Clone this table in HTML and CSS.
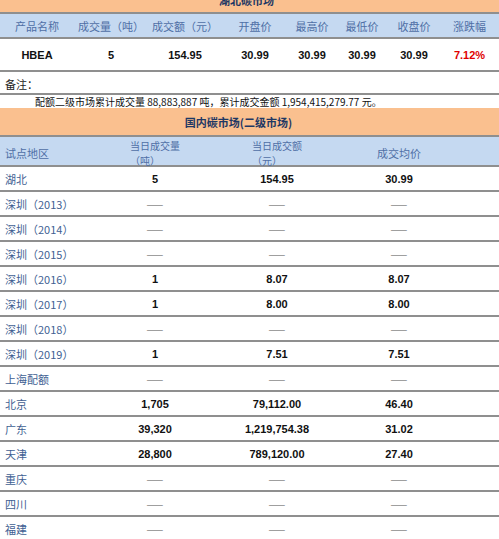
FILE: index.html
```html
<!DOCTYPE html>
<html lang="zh">
<head>
<meta charset="utf-8">
<link rel="stylesheet" href="styles.css">
</head>
<body>
<div class="page">
  <div class="band band-top"><span class="band-title">湖北碳市场</span></div>
  <div class="grid8 head">
    <div>产品名称</div><div>成交量（吨）</div><div>成交额（元）</div><div>开盘价</div><div>最高价</div><div>最低价</div><div>收盘价</div><div>涨跌幅</div>
  </div>
  <div class="grid8 datarow">
    <div>HBEA</div><div>5</div><div>154.95</div><div>30.99</div><div>30.99</div><div>30.99</div><div>30.99</div><div class="red">7.12%</div>
  </div>
  <div class="note">备注：</div>
  <div class="summary">配额二级市场累计成交量 88,883,887 吨，累计成交金额 1,954,415,279.77 元。</div>
  <div class="band band-mid"><span class="band-title">国内碳市场(二级市场)</span></div>
  <div class="grid5 head2">
    <div class="first">试点地区</div>
    <div><span class="wrap"><span class="ln">当日成交量</span><span class="ln">（吨）</span></span></div>
    <div><span class="wrap"><span class="ln">当日成交额</span><span class="ln">（元）</span></span></div>
    <div>成交均价</div>
    <div></div>
  </div>
  <div class="grid5 row"><div class="first">湖北</div><div class="v">5</div><div class="v">154.95</div><div class="v">30.99</div><div></div></div>
  <div class="grid5 row"><div class="first">深圳（2013）</div><div class="d">——</div><div class="d">——</div><div class="d">——</div><div></div></div>
  <div class="grid5 row"><div class="first">深圳（2014）</div><div class="d">——</div><div class="d">——</div><div class="d">——</div><div></div></div>
  <div class="grid5 row"><div class="first">深圳（2015）</div><div class="d">——</div><div class="d">——</div><div class="d">——</div><div></div></div>
  <div class="grid5 row"><div class="first">深圳（2016）</div><div class="v">1</div><div class="v">8.07</div><div class="v">8.07</div><div></div></div>
  <div class="grid5 row"><div class="first">深圳（2017）</div><div class="v">1</div><div class="v">8.00</div><div class="v">8.00</div><div></div></div>
  <div class="grid5 row"><div class="first">深圳（2018）</div><div class="d">——</div><div class="d">——</div><div class="d">——</div><div></div></div>
  <div class="grid5 row"><div class="first">深圳（2019）</div><div class="v">1</div><div class="v">7.51</div><div class="v">7.51</div><div></div></div>
  <div class="grid5 row"><div class="first">上海配额</div><div class="d">——</div><div class="d">——</div><div class="d">——</div><div></div></div>
  <div class="grid5 row"><div class="first">北京</div><div class="v">1,705</div><div class="v">79,112.00</div><div class="v">46.40</div><div></div></div>
  <div class="grid5 row"><div class="first">广东</div><div class="v">39,320</div><div class="v">1,219,754.38</div><div class="v">31.02</div><div></div></div>
  <div class="grid5 row"><div class="first">天津</div><div class="v">28,800</div><div class="v">789,120.00</div><div class="v">27.40</div><div></div></div>
  <div class="grid5 row"><div class="first">重庆</div><div class="d">——</div><div class="d">——</div><div class="d">——</div><div></div></div>
  <div class="grid5 row"><div class="first">四川</div><div class="d">——</div><div class="d">——</div><div class="d">——</div><div></div></div>
  <div class="grid5 row"><div class="first">福建</div><div class="d">——</div><div class="d">——</div><div class="d">——</div><div></div></div>
</div>
</body>
</html>
```
FILE: styles.css
```css
html, body {
  margin: 0;
  padding: 0;
  background: #ffffff;
}
body {
  font-family: "Noto Sans CJK SC", "Noto Sans", sans-serif;
  font-size: 11px;
  color: #222;
  overflow: hidden;
}
.page {
  width: 499px;
}
.band {
  background: #fac08f;
  display: flex;
  align-items: center;
  justify-content: center;
  border-bottom: 2px solid #8f8f8f;
  box-sizing: border-box;
}
.band-title {
  font-weight: bold;
  color: #1f3864;
  font-size: 11px;
}
.band-top {
  height: 28px;
  margin-top: -14px;
  padding-top: 2px;
}
.band-top .band-title {
  position: relative;
  left: -3px;
}
.band-mid {
  height: 29px;
  padding-right: 22px;
}
.grid8 {
  display: grid;
  grid-template-columns: 74px 74px 74px 66px 48px 52px 52px 59px;
  align-items: center;
  text-align: center;
  box-sizing: border-box;
  border-bottom: 2px solid #8f8f8f;
}
.head {
  background: #c5d9f1;
  height: 25px;
  color: #4f6fa6;
}
.datarow {
  height: 33px;
  font-family: "Liberation Sans", "Noto Sans CJK SC", sans-serif;
  font-weight: bold;
  font-size: 11px;
  color: #111;
}
.red {
  color: #e00000;
}
.note {
  height: 23px;
  box-sizing: border-box;
  border-bottom: 2px solid #8f8f8f;
  padding-left: 5px;
  padding-top: 3px;
  display: flex;
  align-items: center;
  color: #222;
}
.summary {
  height: 13px;
  line-height: 13px;
  padding-left: 35px;
  color: #111;
  font-size: 10px;
  white-space: nowrap;
  overflow: hidden;
}
.grid5 {
  display: grid;
  grid-template-columns: 105px 100px 144px 100px 50px;
  align-items: center;
  text-align: center;
  box-sizing: border-box;
  border-bottom: 2px solid #8f8f8f;
}
.head2 {
  background: #c5d9f1;
  height: 30px;
  color: #4f6fa6;
}
.head2 .first {
  text-align: left;
  padding-left: 5px;
}
.wrap {
  display: inline-flex;
  flex-direction: column;
  align-items: flex-start;
  font-size: 10px;
}
.ln {
  display: block;
  height: 14.5px;
  line-height: 14.5px;
}
.row {
  height: 25px;
}
.row .first {
  text-align: left;
  padding-left: 5px;
  color: #3f5f93;
}
.v {
  font-family: "Liberation Sans", "Noto Sans CJK SC", sans-serif;
  font-weight: bold;
  color: #111;
}
.d {
  color: #8a8a8a;
  font-size: 10px;
}
```
